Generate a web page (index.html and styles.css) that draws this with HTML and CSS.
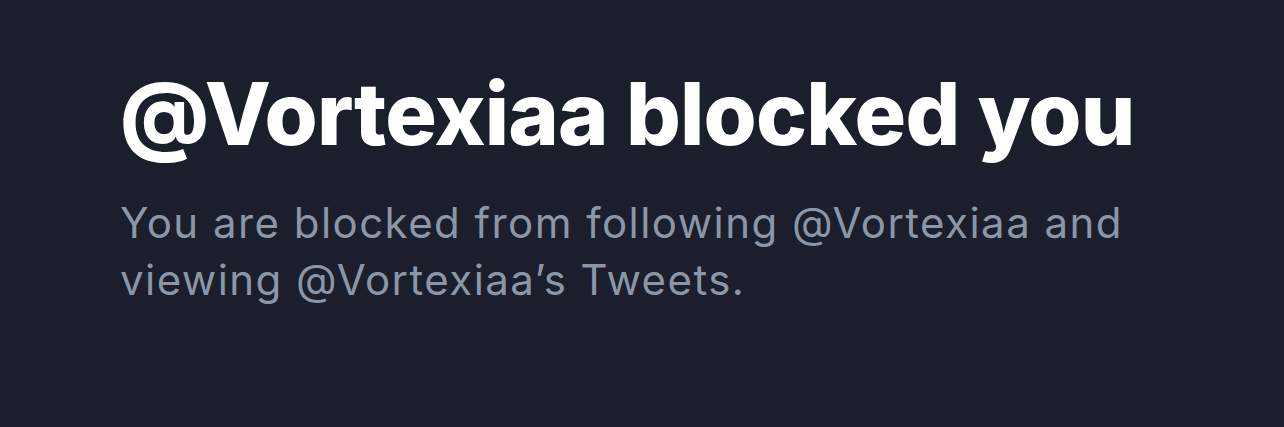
FILE: index.html
```html
<!DOCTYPE html>
<html lang="en">
<head>
    <meta charset="UTF-8">
    <title>Blocked</title>
    <link rel="stylesheet" href="styles.css">
</head>
<body>
    <div class="notice">
        <h1 class="notice-title">@Vortexiaa blocked you</h1>
        <p class="notice-text">You are blocked from following @Vortexiaa and viewing @Vortexiaa’s Tweets.</p>
    </div>
</body>
</html>
```

FILE: styles.css
```css
html, body { margin: 0; height: 100%; }
body { background: #1a1f2b; font-family: Inter, "Noto Sans", sans-serif; }
.notice { padding: 62px 0 0 120px; width: 1040px; }
.notice-title { margin: 0; color: #ffffff; font-size: 86px; font-weight: 800; line-height: 104px; letter-spacing: -0.8px; }
.notice-text { margin: 28px 0 0; color: #8b96a6; font-size: 42px; font-weight: 400; line-height: 57px; letter-spacing: 1.45px; }
```
